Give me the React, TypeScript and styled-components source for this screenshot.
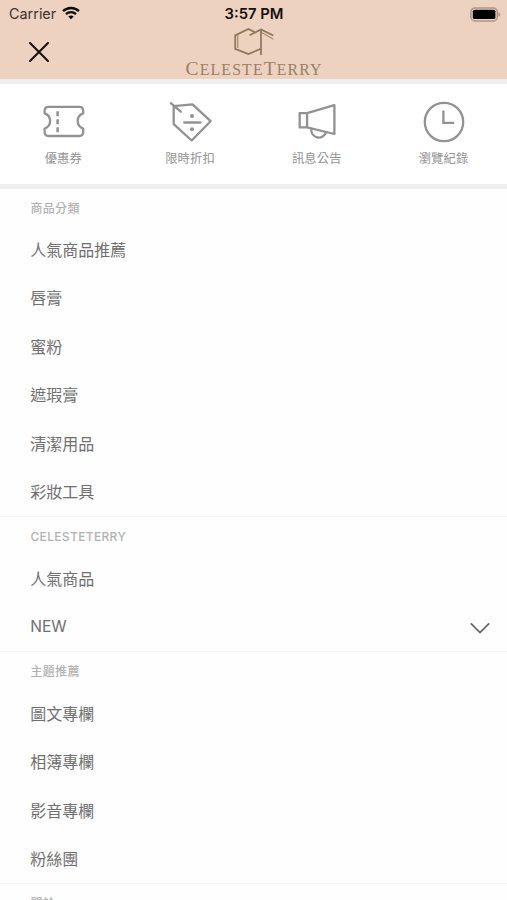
import React from "react";
import styled, { createGlobalStyle } from "styled-components";

const GlobalStyle = createGlobalStyle`
  * { box-sizing: border-box; }
  html, body { margin: 0; padding: 0; background: #fff; }
  body {
    height: 900px;
    overflow: hidden;
    font-family: Inter, "Noto Sans CJK TC", sans-serif;
  }
`;

const Screen = styled.main`
  width: 507px;
  height: 900px;
  overflow: hidden;
  background: #fefefe;
`;

const Header = styled.header`
  height: 79px;
  background: #edd2c0;
`;

const StatusBar = styled.div`
  display: grid;
  grid-template-columns: 1fr auto 1fr;
  align-items: center;
  height: 27px;
  padding: 0 6px 0 7px;
  color: #15100d;
`;

const Carrier = styled.div`
  display: flex;
  align-items: center;
  gap: 6px;
  padding-left: 2px;
  font-size: 14.4px;
  line-height: 28px;
  color: #3b332e;
`;

const Clock = styled.div`
  font-size: 14.8px;
  line-height: 27px;
  font-weight: 600;
`;

const BatterySlot = styled.div`
  display: flex;
  justify-content: flex-end;
`;

const NavBar = styled.div`
  display: grid;
  grid-template-columns: 1fr auto 1fr;
  height: 52px;
`;

const CloseButton = styled.button`
  width: 44px;
  height: 50px;
  margin-left: 17px;
  padding: 0;
  border: 0;
  background: none;
  display: grid;
  place-items: center;
`;

const Brand = styled.div`
  display: flex;
  flex-direction: column;
  align-items: center;
`;

const BrandName = styled.div`
  font-family: "Liberation Serif", serif;
  font-size: 15.8px;
  line-height: 16px;
  margin-top: 6px;
  letter-spacing: 1.15px;
  margin-right: -1.2px;
  color: #9a8164;
  white-space: nowrap;
`;

const BrandCapital = styled.span`
  font-size: 19.5px;
`;

const Band = styled.div`
  height: 5px;
  background: #efefef;
`;

const Shortcuts = styled.nav`
  display: grid;
  grid-template-columns: repeat(4, 1fr);
  height: 100px;
  background: #fff;
`;

const Shortcut = styled.a`
  display: flex;
  flex-direction: column;
  align-items: center;
  padding-top: 14px;
  color: #929292;
  font-size: 12.3px;
  line-height: 18px;
  letter-spacing: 0.2px;

  svg {
    display: block;
    margin-bottom: 4px;
  }
`;

const Section = styled.section<{ $first?: boolean }>`
  border-top: ${(p) => (p.$first ? "0" : "1px solid #f2f2f2")};
`;

const Heading = styled.h2<{ $first?: boolean }>`
  margin: 0;
  height: ${(p) => (p.$first ? 36 : 37)}px;
  padding-left: 30.4px;
  font-size: 12px;
  line-height: 39px;
  font-weight: 500;
  letter-spacing: 0.35px;
  color: #b2b2b2;
`;

const Item = styled.a`
  display: flex;
  align-items: center;
  justify-content: space-between;
  height: 48.5px;
  padding: 1px 17px 0 30.2px;
  font-size: 16px;
  line-height: 24px;
  color: #6f6f6f;
`;

const LatinLabel = styled.span`
  font-size: 15.6px;
  letter-spacing: 0;
`;

const stroke = {
  fill: "none",
  stroke: "#929292",
  strokeWidth: 2.3,
  strokeLinejoin: "round" as const,
  strokeLinecap: "round" as const,
};

const WifiIcon = () => (
  <svg width="18" height="14" viewBox="0 0 19 14" fill="none" stroke="#0d0a08" transform="translate(0 -1)">
    <path d="M1.1 5.1C5.8.5 13.2.5 17.9 5.1" strokeWidth="2.6" />
    <path d="M4.2 8.2c3-2.8 7.6-2.8 10.6 0" strokeWidth="2.4" />
    <path d="M6.6 10.7 9.5 13.7l2.9-3c-1.7-1.5-4.1-1.5-5.8 0Z" fill="#0d0a08" stroke="none" />
  </svg>
);

const BatteryIcon = () => (
  <svg width="31" height="15" viewBox="0 0 31 15">
    <rect x="0.9" y="0.9" width="26.4" height="13" rx="4" fill="none" stroke="#aa978a" strokeWidth="1.5" />
    <rect x="2.8" y="2.8" width="22.6" height="9.2" rx="1.5" fill="#000" />
    <path d="M28.5 5.2c2.4 1 2.4 3.6 0 4.6Z" fill="#aa978a" />
  </svg>
);

const CloseIcon = () => (
  <svg width="20" height="20" viewBox="0 0 20 20" stroke="#15100d" strokeWidth="2" strokeLinecap="round">
    <path d="m1 1 18 18M19 1 1 19" />
  </svg>
);

const LogoMark = () => (
  <svg width="40" height="28" viewBox="0 0 40 28" fill="none" stroke="#8c7658" strokeWidth="1.7">
    <path d="M20.6 5 14.4 2 1.2 8.4v13.4l13.2 5.2L27 21.8" />
    <path d="M3.8 8.4v12.6" strokeWidth="1" />
    <path d="M15.6 8.3 27 2.4l12.4 6" />
    <path d="m27.5 5.4 11.8 6.8" strokeWidth="1" />
    <path d="M27 2.4V28" />
  </svg>
);

const TicketIcon = () => (
  <svg width="48" height="48" viewBox="0 0 48 48" {...stroke}>
    <path d="M9.6 8.8h30.6q4 0 4 4v2.6a8 8 0 0 0 0 15.2v3.4q0 4-4 4H9.6q-4 0-4-4v-3.4a8 8 0 0 0 0-15.2v-2.6q0-4 4-4Z" />
    <path d="M18.6 13.2v5M18.6 21.2v5M18.6 29.2v5" strokeLinecap="butt" strokeWidth="2.5" />
  </svg>
);

const TagIcon = () => (
  <svg width="48" height="48" viewBox="0 0 48 48" {...stroke}>
    <path d="M7.7 8.1 26.5 6.4 44.6 23.2 25.7 42.5 7.7 26.2Z" />
    <path d="m4.8 5.2 10 8.5M18.2 24.5h16.2" />
    <circle cx="26" cy="18" r="2" fill="#929292" stroke="none" />
    <circle cx="26" cy="31.2" r="2" fill="#929292" stroke="none" />
  </svg>
);

const MegaphoneIcon = () => (
  <svg width="48" height="48" viewBox="0 0 48 48" {...stroke}>
    <path d="M6.7 15.2h7.4v14.2H6.7ZM14.1 15.2 41.4 7.2v28.8L14.1 29.4" />
    <path d="M18.3 31a7.6 7.6 0 0 0 14.8 3.2" />
  </svg>
);

const HistoryIcon = () => (
  <svg width="48" height="48" viewBox="0 0 48 48" {...stroke}>
    <circle cx="24" cy="24" r="19.2" />
    <path d="M23.4 12.6v12.3h10.8" strokeLinecap="butt" strokeLinejoin="miter" />
  </svg>
);

const ChevronDown = () => (
  <svg width="20" height="12" viewBox="0 0 20 12" fill="none" stroke="#686868" strokeWidth="1.8" transform="translate(0 1)">
    <path d="m.8 1.4 9.2 9.2 9.2-9.2" />
  </svg>
);

const shortcuts = [
  { label: "優惠券", Icon: TicketIcon },
  { label: "限時折扣", Icon: TagIcon },
  { label: "訊息公告", Icon: MegaphoneIcon },
  { label: "瀏覽紀錄", Icon: HistoryIcon },
];

const sections: { title: string; items: { label: string; expandable?: boolean }[] }[] = [
  {
    title: "商品分類",
    items: [
      { label: "人氣商品推薦" },
      { label: "唇膏" },
      { label: "蜜粉" },
      { label: "遮瑕膏" },
      { label: "清潔用品" },
      { label: "彩妝工具" },
    ],
  },
  { title: "CELESTETERRY", items: [{ label: "人氣商品" }, { label: "NEW", expandable: true }] },
  {
    title: "主題推薦",
    items: [{ label: "圖文專欄" }, { label: "相簿專欄" }, { label: "影音專欄" }, { label: "粉絲團" }],
  },
  { title: "關於", items: [] },
];

export default function App() {
  return (
    <>
      <GlobalStyle />
      <Screen>
        <Header>
          <StatusBar>
            <Carrier>
              Carrier
              <WifiIcon />
            </Carrier>
            <Clock>3:57 PM</Clock>
            <BatterySlot>
              <BatteryIcon />
            </BatterySlot>
          </StatusBar>
          <NavBar>
            <CloseButton aria-label="Close">
              <CloseIcon />
            </CloseButton>
            <Brand>
              <LogoMark />
              <BrandName>
                <BrandCapital>C</BrandCapital>ELESTE<BrandCapital>T</BrandCapital>ERRY
              </BrandName>
            </Brand>
          </NavBar>
        </Header>
        <Band />
        <Shortcuts>
          {shortcuts.map(({ label, Icon }) => (
            <Shortcut key={label}>
              <Icon />
              {label}
            </Shortcut>
          ))}
        </Shortcuts>
        <Band />
        {sections.map((section, index) => (
          <Section key={section.title} $first={index === 0}>
            <Heading $first={index === 0}>{section.title}</Heading>
            {section.items.map((item) => (
              <Item key={item.label}>
                {item.expandable ? <LatinLabel>{item.label}</LatinLabel> : item.label}
                {item.expandable && <ChevronDown />}
              </Item>
            ))}
          </Section>
        ))}
      </Screen>
    </>
  );
}
